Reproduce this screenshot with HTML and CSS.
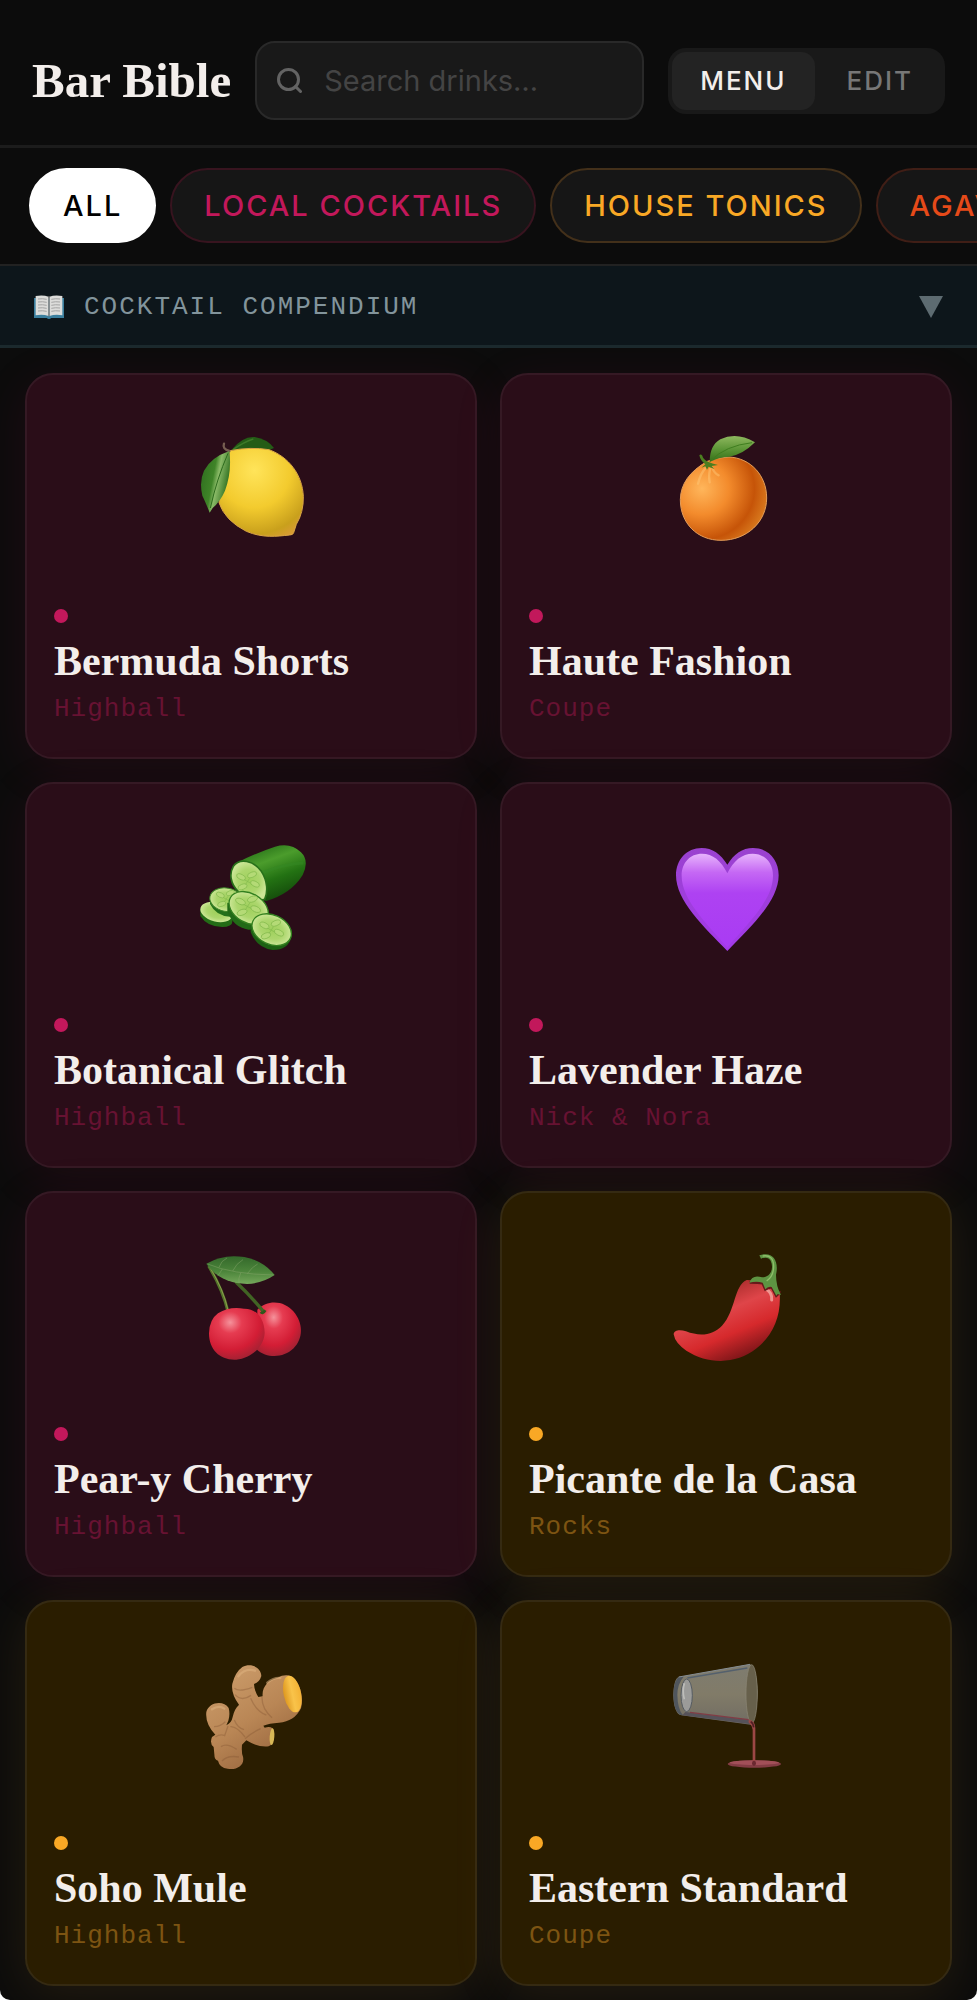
FILE: index.html
```html
<!DOCTYPE html>
<html lang="en">
<head>
    <meta charset="UTF-8">
    <meta name="viewport" content="width=device-width, initial-scale=1.0">
    <title>Bar Bible</title>
    <link rel="stylesheet" href="styles.css">
</head>
<body>
    <header class="header">
        <h1>Bar Bible</h1>
        <div class="search">
            <svg class="search-icon" viewBox="0 0 25 25" aria-hidden="true">
                <circle cx="11.5" cy="11.5" r="10"/>
                <path d="M18.5 18.5l5 5"/>
            </svg>
            <input type="text" aria-label="Search drinks" placeholder="Search drinks…">
        </div>
        <div class="mode-toggle">
            <button class="mode active">MENU</button>
            <button class="mode">EDIT</button>
        </div>
    </header>

    <nav class="tabs">
        <button class="tab active">ALL</button>
        <button class="tab local">LOCAL COCKTAILS</button>
        <button class="tab tonics">HOUSE TONICS</button>
        <button class="tab agave">AGAVE</button>
    </nav>

    <button class="compendium">
        <svg class="book" viewBox="0 0 90 72" aria-hidden="true">
            <path d="M0 9h90v60H52q-7 6-14 0H0z" fill="#3b7f9e"/>
            <path d="M5 3q22-4 39 2v58q-18-6-39-2zM85 3q-22-4-39 2v58q18-6 39-2z" fill="#dcdcda"/>
            <path d="M12 12q14-2 26 1M12 21q14-2 26 1M12 30q14-2 26 1M12 39q14-2 26 1M12 48q14-2 26 1M52 13q12-3 26-1M52 22q12-3 26-1M52 31q12-3 26-1M52 40q12-3 26-1M52 49q12-3 26-1" fill="none" stroke="#a3a3a3" stroke-width="3"/>
            <path d="M45 4v60" stroke="#777" stroke-width="4"/>
        </svg>
        <span class="compendium-label">COCKTAIL COMPENDIUM</span>
        <svg class="arrow" viewBox="0 0 24 22" aria-hidden="true"><path d="M0 0h24L12 22z"/></svg>
    </button>

    <main class="drinks">
        <article class="card local">
            <div class="card-art">
                <svg viewBox="573 198 360 360" aria-hidden="true">
                    <defs>
                        <radialGradient id="lemon" cx=".42" cy=".25" r=".85">
                            <stop offset="0" stop-color="#ffe45a"/>
                            <stop offset=".5" stop-color="#f3cb2e"/>
                            <stop offset=".85" stop-color="#c9a01c"/>
                            <stop offset="1" stop-color="#d99b35"/>
                        </radialGradient>
                        <linearGradient id="lemonLeaf" x1="0" y1="0" x2="1" y2=".4">
                            <stop offset="0" stop-color="#2c6a1d"/>
                            <stop offset=".5" stop-color="#3f8428"/>
                            <stop offset=".65" stop-color="#8aba67"/>
                            <stop offset="1" stop-color="#2f6f1f"/>
                        </linearGradient>
                    </defs>
                    <path d="M694 270q34-42 70-39q38 6 58 33l-22 9z" fill="#245c16"/>
                    <path d="M700 268q32-22 60-31" fill="none" stroke="#3d7a28" stroke-width="4"/>
                    <path d="M690 272q62-12 117-3c60 22 100 75 103 140q1 48-21 84l-8 25q-2 7-12 7c-40 4-80 10-130-11q-64-32-82-86z" fill="url(#lemon)" stroke="#dba545" stroke-width="3"/>
                    <path d="M688 273q-22-6-16-22" fill="none" stroke="#765d50" stroke-width="7" stroke-linecap="round"/>
                    <path d="M688 273q8 62-13 119q-14 32-37 52l-9 14q-13-33-22-51q-10-43 5-75q21-40 76-59z" fill="url(#lemonLeaf)"/>
                    <path d="M684 280q-34 78-53 164" fill="none" stroke="#2d6b1d" stroke-width="3"/>
                </svg>
            </div>
            <div class="card-body">
                <span class="dot"></span>
                <h2>Bermuda Shorts</h2>
                <p>Highball</p>
            </div>
        </article>

        <article class="card local">
            <div class="card-art">
                <svg viewBox="528 198 360 360" aria-hidden="true">
                    <defs>
                        <radialGradient id="orange" cx=".25" cy=".38" r=".78">
                            <stop offset="0" stop-color="#ffb65b"/>
                            <stop offset=".4" stop-color="#f38b2c"/>
                            <stop offset=".78" stop-color="#c65408"/>
                            <stop offset="1" stop-color="#d97a1e"/>
                        </radialGradient>
                        <linearGradient id="orangeLeaf" x1="0" y1="0" x2="0" y2="1">
                            <stop offset="0" stop-color="#8fb85f"/>
                            <stop offset=".5" stop-color="#5d9637"/>
                            <stop offset="1" stop-color="#356f18"/>
                        </linearGradient>
                    </defs>
                    <path d="M652 304q30-12 65-13c64 3 113 55 113 123c0 72-60 127-137 127c-71 0-122-51-122-122q1-70 81-115z" fill="url(#orange)" stroke="#e39c59" stroke-width="3"/>
                    <path d="M648 323q-16 16-24 48M660 327q-5 22-1 40M666 322q7 18 20 24" fill="none" stroke="#ffc97b" stroke-width="7" stroke-linecap="round" opacity=".45"/>
                    <path d="M659 306q0-50 32-68q49-24 104 9q-38 38-77 43q-33 1-59 16z" fill="url(#orangeLeaf)"/>
                    <path d="M662 302q44-45 124-54" fill="none" stroke="#3f7d1f" stroke-width="3"/>
                    <path d="M634 323l12-10q-15-11-18-27q4-6 9 1q2 11 17 18q12 6 30 10l-19 3 8 9-17-7-5 9-5-10z" fill="#4c7e20"/>
                </svg>
            </div>
            <div class="card-body">
                <span class="dot"></span>
                <h2>Haute Fashion</h2>
                <p>Coupe</p>
            </div>
        </article>

        <article class="card local">
            <div class="card-art">
                <svg viewBox="63 45 360 360" aria-hidden="true">
                    <defs>
                        <linearGradient id="cucumber" x1=".25" y1="0" x2=".7" y2="1">
                            <stop offset="0" stop-color="#236c16"/>
                            <stop offset=".3" stop-color="#4b9c2c"/>
                            <stop offset=".6" stop-color="#237213"/>
                            <stop offset="1" stop-color="#114309"/>
                        </linearGradient>
                        <radialGradient id="cucumberCut">
                            <stop offset="0" stop-color="#9fd05c"/>
                            <stop offset=".6" stop-color="#acd66d"/>
                            <stop offset="1" stop-color="#cbe695"/>
                        </radialGradient>
                        <g id="seeds" fill="#b4da76" stroke="#86bc4f" stroke-width="2">
                            <ellipse cx="-18" cy="-12" rx="13" ry="7" transform="rotate(25 -18 -12)"/>
                            <ellipse cx="12" cy="-18" rx="13" ry="7" transform="rotate(-20 12 -18)"/>
                            <ellipse cx="20" cy="7" rx="13" ry="7" transform="rotate(25 20 7)"/>
                            <ellipse cx="-14" cy="15" rx="13" ry="7" transform="rotate(-20 -14 15)"/>
                            <path d="M-10-5l18 10M5-8l-11 17" fill="none"/>
                        </g>
                    </defs>
                    <path d="M205 126q55-28 110-46q47-14 78 17q26 25 5 68q-35 57-112 79z" fill="url(#cucumber)"/>
                    <path d="M276 159q66-27 124-30" stroke="#348823" stroke-width="9" fill="none" opacity=".5"/>
                    <path d="M190 139c18-26 61-18 84 15c19 29 20 62 10 84q-41 13-79-23c-24-24-28-54-15-76z" fill="url(#cucumberCut)" stroke="#28711a" stroke-width="5"/>
                    <use href="#seeds" transform="translate(233 184) scale(1.1)"/>
                    <path d="M91 268v20q20 32 65 33q31-1 31-16v-25z" fill="#236c16"/>
                    <ellipse cx="139" cy="276" rx="49" ry="29" transform="rotate(15 139 276)" fill="url(#cucumberCut)"/>
                    <path d="M120 231v21q18 36 60 38l37-26z" fill="#23701a"/>
                    <ellipse cx="169" cy="239" rx="50" ry="35" transform="rotate(10 169 239)" fill="url(#cucumberCut)" stroke="#3d8427" stroke-width="3"/>
                    <use href="#seeds" transform="translate(169 237)"/>
                    <path d="M172 248v25q17 49 64 56q48 0 59-40v-17z" fill="#226a17"/>
                    <ellipse cx="236" cy="264" rx="63" ry="44" transform="rotate(30 236 264)" fill="url(#cucumberCut)" stroke="#33801f" stroke-width="4"/>
                    <use href="#seeds" transform="translate(233 259) scale(1.2)"/>
                    <path d="M242 314v22q17 46 66 54q49 0 57-42v-16z" fill="#1d6113"/>
                    <ellipse cx="305" cy="329" rx="62" ry="44" transform="rotate(25 305 329)" fill="url(#cucumberCut)" stroke="#33801f" stroke-width="4"/>
                    <use href="#seeds" transform="translate(304 330) scale(1.15)"/>
                </svg>
            </div>
            <div class="card-body">
                <span class="dot"></span>
                <h2>Botanical Glitch</h2>
                <p>Highball</p>
            </div>
        </article>

        <article class="card local">
            <div class="card-art">
                <svg viewBox="48 45 360 360" aria-hidden="true">
                    <defs>
                        <linearGradient id="heartEdge" x1="0" y1="0" x2="0" y2="1">
                            <stop offset="0" stop-color="#9a42cf"/>
                            <stop offset="1" stop-color="#a33ae9"/>
                        </linearGradient>
                        <linearGradient id="heart" x1="0" y1="0" x2="0" y2="1">
                            <stop offset="0" stop-color="#e7b4fc"/>
                            <stop offset=".2" stop-color="#c568f4"/>
                            <stop offset=".42" stop-color="#ae42f2"/>
                            <stop offset="1" stop-color="#a93bf3"/>
                        </linearGradient>
                    </defs>
                    <path d="M232 134c-20-32-45-50-77-50c-45 0-77 35-77 82c0 77 83 154 154 227c71-73 154-150 154-227c0-47-32-82-77-82c-32 0-57 18-77 50z" fill="url(#heartEdge)"/>
                    <path d="M232 160c-18-38-44-59-76-59c-36 0-61 27-61 66c0 72 72 139 137 215c65-76 137-143 137-215c0-39-25-66-61-66c-32 0-58 21-76 59z" fill="url(#heart)"/>
                </svg>
            </div>
            <div class="card-body">
                <span class="dot"></span>
                <h2>Lavender Haze</h2>
                <p>Nick &amp; Nora</p>
            </div>
        </article>

        <article class="card local">
            <div class="card-art">
                <svg viewBox="63 42 360 360" aria-hidden="true">
                    <defs>
                        <radialGradient id="cherry" cx=".38" cy=".28" r=".75">
                            <stop offset="0" stop-color="#f5929b"/>
                            <stop offset=".28" stop-color="#e63c51"/>
                            <stop offset=".7" stop-color="#d31d35"/>
                            <stop offset="1" stop-color="#9f2233"/>
                        </radialGradient>
                        <linearGradient id="cherryLeaf" x1="0" y1="0" x2="0" y2="1">
                            <stop offset="0" stop-color="#33682a"/>
                            <stop offset=".55" stop-color="#4c853b"/>
                            <stop offset="1" stop-color="#75a75b"/>
                        </linearGradient>
                    </defs>
                    <path d="M262 239c33-34 84-25 108 5c31 36 30 82 1 111c-32 31-82 29-110 4z" fill="url(#cherry)"/>
                    <path d="M116 108q42 70 58 137" fill="none" stroke="#53752b" stroke-width="9"/>
                    <path d="M119 111q41 67 54 126" fill="none" stroke="#8b9c4b" stroke-width="3"/>
                    <path d="M200 158q38 35 78 84" fill="none" stroke="#416424" stroke-width="10" stroke-linecap="round"/>
                    <path d="M272 246q6 7 14-5" fill="none" stroke="#31561b" stroke-width="8"/>
                    <path d="M144 250q35-22 78-14c36-1 61 28 62 72c-2 42-40 77-85 81c-47 3-82-28-82-79q1-41 27-60z" fill="url(#cherry)"/>
                    <path d="M109 101q50-30 114-20q57 11 91 54q-37 25-83 27c-54-2-94-20-122-61z" fill="url(#cherryLeaf)"/>
                    <path d="M113 102q73 31 198 33M147 112q6-20 24-28M188 123q11-23 31-34M232 131q14-20 31-29M157 117q-10 17-14 20M212 129q-8 18-5 30" fill="none" stroke="#88a76b" stroke-width="2" opacity=".7"/>
                </svg>
            </div>
            <div class="card-body">
                <span class="dot"></span>
                <h2>Pear-y Cherry</h2>
                <p>Highball</p>
            </div>
        </article>

        <article class="card tonics">
            <div class="card-art">
                <svg viewBox="48 42 360 360" aria-hidden="true">
                    <defs>
                        <linearGradient id="chili" x1=".25" y1=".1" x2=".75" y2="1">
                            <stop offset="0" stop-color="#9a2523"/>
                            <stop offset=".35" stop-color="#df4549"/>
                            <stop offset=".62" stop-color="#d6292c"/>
                            <stop offset="1" stop-color="#651013"/>
                        </linearGradient>
                    </defs>
                    <path d="M290 150q51-1 99 39c5 69-20 127-69 166c-61 49-145 49-211 7q-34-23-38-49c1-15 22-14 37-9c43 17 82 11 108-17c42-45 35-120 74-137z" fill="url(#chili)"/>
                    <path d="M347 177q20 10 18 33" fill="none" stroke="#f6b0a8" stroke-width="9" stroke-linecap="round" opacity=".75"/>
                    <path d="M299 157q28 0 39 3l8 18q13-8 20-5l13 24q11-8 9-13" fill="none" stroke="#66191a" stroke-width="8"/>
                    <path d="M328 76c39-14 60 15 50 58q0 34 15 61l-10-3-4 5-14-26q-11-3-19 7l-8-20q-18-5-40 0q9-26 38-16c28 0 36-29 26-50q-8-14-29-6z" fill="#5d9442"/>
                    <path d="M338 78q32-5 33 30q0 31-21 45" fill="none" stroke="#8ebd69" stroke-width="4"/>
                </svg>
            </div>
            <div class="card-body">
                <span class="dot"></span>
                <h2>Picante de la Casa</h2>
                <p>Rocks</p>
            </div>
        </article>

        <article class="card tonics">
            <div class="card-art">
                <svg viewBox="63 39 360 360" aria-hidden="true">
                    <defs>
                        <linearGradient id="ginger" x1=".2" y1="0" x2=".8" y2="1">
                            <stop offset="0" stop-color="#cc9d6b"/>
                            <stop offset=".5" stop-color="#b98655"/>
                            <stop offset="1" stop-color="#926039"/>
                        </linearGradient>
                        <linearGradient id="gingerCut" x1="0" y1="0" x2="1" y2="0">
                            <stop offset="0" stop-color="#dd9720"/>
                            <stop offset=".5" stop-color="#f9c34a"/>
                            <stop offset="1" stop-color="#f4b234"/>
                        </linearGradient>
                    </defs>
                    <path d="M207 194q-25-34-20-63q9-35 30-50c25-13 56 0 57 27q-5 18-22 24q0 18 13 39l13-2c-3-29 18-50 45-56q14-8 28-7c33 3 53 58 42 99q-20 40-66 43q-30 2-47 9l4 6q26-7 28 13q2 36-16 43q-31 4-67-18l-13 13q-2 27 3 36c6 27-20 41-46 36q-24-2-29-24q-11-2-11-20l-2-21q-13-11-5-30l10-7q-31-33-27-68c7-30 52-37 67-12q5 19-1 38l-6 14q16-8 19-25q6-25 18-35z" fill="url(#ginger)"/>
                    <path d="M195 164q20 22 48 2M193 145q14 12 54-3M132 260q20-1 34-15M174 258l-10 29q-13-6-28 4M181 260q19-2 44 31M225 296q21-19 47-30M193 240q9 23 29 29M242 175q17 40 47 50M276 171q-1 35 30 62M153 320q17-12 47 8M156 363q16-18 51-12" fill="none" stroke="#805230" stroke-width="4" opacity=".35"/>
                    <path d="M205 109q20-26 50-17M126 208q21-14 37-2M292 128q20-16 39-14" fill="none" stroke="#dfb37f" stroke-width="7" opacity=".55" stroke-linecap="round"/>
                    <ellipse cx="367" cy="162" rx="26" ry="56" transform="rotate(-12 367 162)" fill="url(#gingerCut)"/>
                    <ellipse cx="306" cy="290" rx="7" ry="25" fill="#d8b856" transform="rotate(4 306 290)"/>
                </svg>
            </div>
            <div class="card-body">
                <span class="dot"></span>
                <h2>Soho Mule</h2>
                <p>Highball</p>
            </div>
        </article>

        <article class="card tonics">
            <div class="card-art">
                <svg viewBox="48 39 360 360" aria-hidden="true">
                    <defs>
                        <linearGradient id="glass" x1="0" y1="0" x2="0" y2="1">
                            <stop offset="0" stop-color="#7e7c70"/>
                            <stop offset=".5" stop-color="#817b68"/>
                            <stop offset="1" stop-color="#706c63"/>
                        </linearGradient>
                    </defs>
                    <path d="M86 111L300 73q20 7 23 82q-2 75-21 99L94 226q-23-6-24-62q2-48 16-53z" fill="url(#glass)"/>
                    <path d="M86 111l16-2q-20 23-20 56q1 43 17 61l-9-2q-19-11-20-61q1-41 16-52z" fill="#50565d"/>
                    <path d="M86 111L300 73" stroke="#858c91" stroke-width="3" fill="none"/>
                    <path d="M112 114l180-30" stroke="#54606d" stroke-width="5" fill="none"/>
                    <ellipse cx="305" cy="162" rx="17" ry="88" fill="#67604b" stroke="#8b8776" stroke-width="2"/>
                    <ellipse cx="110" cy="166" rx="17" ry="49" fill="#9b9b99" stroke="#555b61" stroke-width="3"/>
                    <path d="M103 130q-7 24 0 48" stroke="#bdbdba" stroke-width="5" fill="none"/>
                    <path d="M106 216l189 23 8 14-206-27z" fill="#565259"/>
                    <path d="M120 217l176 22" stroke="#813c45" stroke-width="4" fill="none"/>
                    <ellipse cx="313" cy="372" rx="80" ry="11" fill="#843c44"/>
                    <ellipse cx="313" cy="368" rx="74" ry="7" fill="#a24f58"/>
                    <path d="M298 239q18 4 18 26v107h-8V269q-2-13-13-23z" fill="#9c4745"/>
                    <path d="M302 245q8 5 9 17" stroke="#501e24" stroke-width="5" fill="none"/>
                    <ellipse cx="312" cy="370" rx="6" ry="8" fill="#6a2830"/>
                </svg>
            </div>
            <div class="card-body">
                <span class="dot"></span>
                <h2>Eastern Standard</h2>
                <p>Coupe</p>
            </div>
        </article>
    </main>
</body>
</html>
```

FILE: styles.css
```css
* {
    box-sizing: border-box;
}

html {
    background: #fff;
}

body {
    margin: 0;
    background: #0c0c0c;
    color: #f3eeeb;
    font-family: Inter, sans-serif;
    border-radius: 0 0 10px 10px;
}

button {
    font-family: inherit;
    border: none;
    cursor: pointer;
}

h1, h2, p {
    margin: 0;
}

.header {
    display: flex;
    align-items: center;
    gap: 24px;
    padding: 41px 32px 25px;
    border-bottom: 3px solid #1c1c1c;
}

h1 {
    font: bold 49px/60px "Liberation Serif", serif;
    white-space: nowrap;
}

.search {
    flex: 1;
    min-width: 0;
    height: 79px;
    display: flex;
    align-items: center;
    gap: 22px;
    padding: 0 20px;
    background: #191919;
    border: 2px solid #292929;
    border-radius: 20px;
}

.search-icon {
    width: 25px;
    height: 25px;
    flex-shrink: 0;
    fill: none;
    stroke: #636363;
    stroke-width: 3;
    stroke-linecap: round;
}

.search input {
    flex: 1;
    min-width: 0;
    padding: 0;
    background: none;
    border: none;
    outline: none;
    color: #f3eeeb;
    font: 29px Inter, sans-serif;
}

.search input::placeholder {
    color: #444;
    opacity: 1;
}

.mode-toggle {
    display: flex;
    gap: 4px;
    padding: 4px;
    background: #191919;
    border-radius: 18px;
}

.mode {
    height: 58px;
    padding: 0 28px;
    background: none;
    border-radius: 14px;
    color: #777;
    font-size: 26px;
    font-weight: 500;
    letter-spacing: 2px;
}

.mode.active {
    background: #232323;
    color: #f3eeeb;
}

.tabs {
    display: flex;
    gap: 14px;
    padding: 20px 29px 21px;
    border-bottom: 2px solid #222;
    overflow-x: auto;
    scrollbar-width: none;
}

.tab {
    flex-shrink: 0;
    height: 75px;
    padding: 0 32px;
    background: #161616;
    border: 2px solid;
    border-radius: 38px;
    font-size: 29px;
    font-weight: 500;
    letter-spacing: 2px;
}

.tab.active {
    background: #fff;
    border-color: #fff;
    color: #000;
}

.tab.local {
    color: #c2185b;
    border-color: #38141f;
}

.tab.tonics {
    color: #f9a825;
    border-color: #43301a;
}

.tab.agave {
    color: #e64a19;
    border-color: #401e16;
}

.compendium {
    display: flex;
    align-items: center;
    width: 100%;
    height: 82px;
    padding: 2px 34px 0;
    background: #0d161b;
    border-bottom: 3px solid #1b292d;
    color: #82949b;
    font: 26px "Liberation Mono", monospace;
    letter-spacing: 2px;
}

.book {
    width: 30px;
    height: 24px;
    margin-right: 20px;
}

.compendium-label {
    flex: 1;
    text-align: left;
}

.arrow {
    width: 24px;
    height: 22px;
    fill: #5d6b71;
}

.drinks {
    display: grid;
    grid-template-columns: 1fr 1fr;
    gap: 23px;
    padding: 25px 25px 14px;
    overflow: hidden;
}

.card {
    border: 2px solid #351924;
    border-radius: 28px;
}

.card.local {
    background: #2a0d18;
    box-shadow: 0 10px 50px rgba(194, 24, 91, 0.1);
}

.card.tonics {
    background: #2a1d00;
    border-color: #352a12;
    box-shadow: 0 10px 50px rgba(249, 168, 37, 0.1);
}

.card-art {
    display: flex;
    align-items: center;
    justify-content: center;
    height: 222px;
}

.card-art svg {
    width: 120px;
    height: 120px;
}

.card-body {
    padding: 12px 27px 30px;
}

.dot {
    display: block;
    width: 14px;
    height: 14px;
    border-radius: 50%;
}

.card.local .dot {
    background: #c2185b;
}

.card.tonics .dot {
    background: #f9a825;
}

.card h2 {
    margin-top: 12px;
    font: bold 42px/52px "Liberation Serif", serif;
}

.card p {
    margin-top: 4px;
    font: 26px/36px "Liberation Mono", monospace;
    letter-spacing: 1px;
}

.card.local p {
    color: #671232;
}

.card.tonics p {
    color: #7d5412;
}

@media (max-width: 700px) {
    .header {
        flex-wrap: wrap;
    }

    .drinks {
        grid-template-columns: 1fr;
    }
}
```
